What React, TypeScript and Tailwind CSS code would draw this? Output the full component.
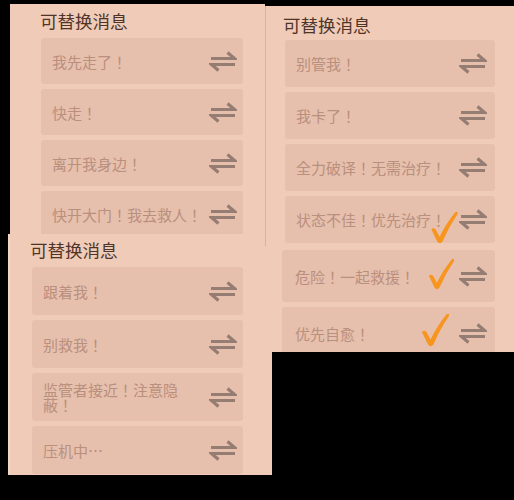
import React from 'react';

type Msg = { text: string; check?: { left: number; top: number; w: number; h: number } };

function SwapIcon() {
  return (
    <svg width="28" height="21" viewBox="0 0 28 21" className="shrink-0 blur-[0.4px]">
      <path d="M2 7.5 H25.5 L18.5 1.5" fill="none" stroke="#967d73" strokeWidth="3.2" strokeLinejoin="miter" />
      <path d="M26 13.5 H2.5 L9.5 19.5" fill="none" stroke="#967d73" strokeWidth="3.2" strokeLinejoin="miter" />
    </svg>
  );
}

function Check({ left, top, w, h }: { left: number; top: number; w: number; h: number }) {
  return (
    <svg viewBox="0 0 30 34" className="absolute" style={{ left, top, width: w, height: h }}>
      <path
        d="M2 19 Q4 16.5 6.5 19 L10.5 26.5 Q17 13 26.5 1.2 Q29.5 -0.5 29 3 Q20 16 13.5 31.5 Q10.5 35 8 31.5 Z"
        fill="#f7951f"
      />
    </svg>
  );
}

function Row({ msg, h, padL = 11, padR = 6, textW }: { msg: Msg; h: string; padL?: number; padR?: number; textW?: string }) {
  return (
    <div
      className={`relative flex items-center justify-between rounded-[3px] bg-[#e7c0ad] ${h}`}
      style={{ paddingLeft: padL, paddingRight: padR }}
    >
      <span className={`text-[15px] leading-[15px] text-[#b98f7e] ${textW ?? ''}`}>{msg.text}</span>
      {msg.check && <Check {...msg.check} />}
      <SwapIcon />
    </div>
  );
}

function Title({ children, className }: { children: React.ReactNode; className: string }) {
  return <div className={`flex items-center text-[17.5px] text-[#4f3428] ${className}`}>{children}</div>;
}

export default function App() {
  const p1: Msg[] = [{ text: '我先走了！' }, { text: '快走！' }, { text: '离开我身边！' }, { text: '快开大门！我去救人！' }];
  const p2: Msg[] = [
    { text: '别管我！' },
    { text: '我卡了！' },
    { text: '全力破译！无需治疗！' },
    { text: '状态不佳！优先治疗！', check: { left: 143, top: 15, w: 32, h: 33 } },
  ];
  const p2b: Msg[] = [
    { text: '危险！一起救援！', check: { left: 145, top: 8, w: 28, h: 32 } },
    { text: '优先自愈！', check: { left: 138, top: 6, w: 30, h: 34 } },
  ];
  const p3: Msg[] = [{ text: '跟着我！' }, { text: '别救我！' }, { text: '监管者接近！注意隐蔽！' }, { text: '压机中…' }];

  return (
    <div className="relative h-[500px] w-[514px] overflow-hidden bg-black font-['Noto_Sans_CJK_JP','Noto_Sans',sans-serif]">
      {/* top left */}
      <div className="absolute left-[10px] top-[4px] z-10 h-[236px] w-[255px] bg-[#f0cbb8] pl-[30px]">
        <Title className="h-[34px]">可替换消息</Title>
        <div className="ml-[1px] flex w-[202px] flex-col gap-[5px]">
          {p1.map((m) => (
            <Row key={m.text} msg={m} h="h-[46px]" />
          ))}
        </div>
      </div>

      {/* bottom left */}
      <div className="absolute left-[8px] top-[234px] z-20 h-[241px] w-[264px] overflow-hidden border-l-2 border-[#f4d6c6] bg-[#f0cbb8] pl-[20px]">
        <Title className="h-[33px]">可替换消息</Title>
        <div className="ml-[2px] flex w-[211px] flex-col gap-[5px]">
          {p3.map((m) => (
            <Row key={m.text} msg={m} h="h-[48px]" textW="w-[142px]" />
          ))}
        </div>
      </div>

      {/* top right */}
      <div className="absolute left-[265px] top-[6px] z-30 h-[240px] w-[249px] overflow-hidden border-l border-[#d9b19e] bg-[#f0cbb8] pl-[17px]">
        <Title className="h-[34px] pt-[4px]">可替换消息</Title>
        <div className="ml-[2px] flex w-[210px] flex-col gap-[5px]">
          {p2.map((m) => (
            <Row key={m.text} msg={m} h="h-[47px]" padR={8} />
          ))}
        </div>
      </div>

      {/* bottom right */}
      <div className="absolute left-[259px] top-[246px] z-30 h-[106px] w-[255px] overflow-hidden bg-[#f0cbb8] pl-[23px] pt-[4px]">
        <div className="flex w-[213px] flex-col gap-[5px]">
          {p2b.map((m) => (
            <Row key={m.text} msg={m} h="h-[52px] shrink-0" padL={13} padR={8} />
          ))}
        </div>
      </div>
    </div>
  );
}
